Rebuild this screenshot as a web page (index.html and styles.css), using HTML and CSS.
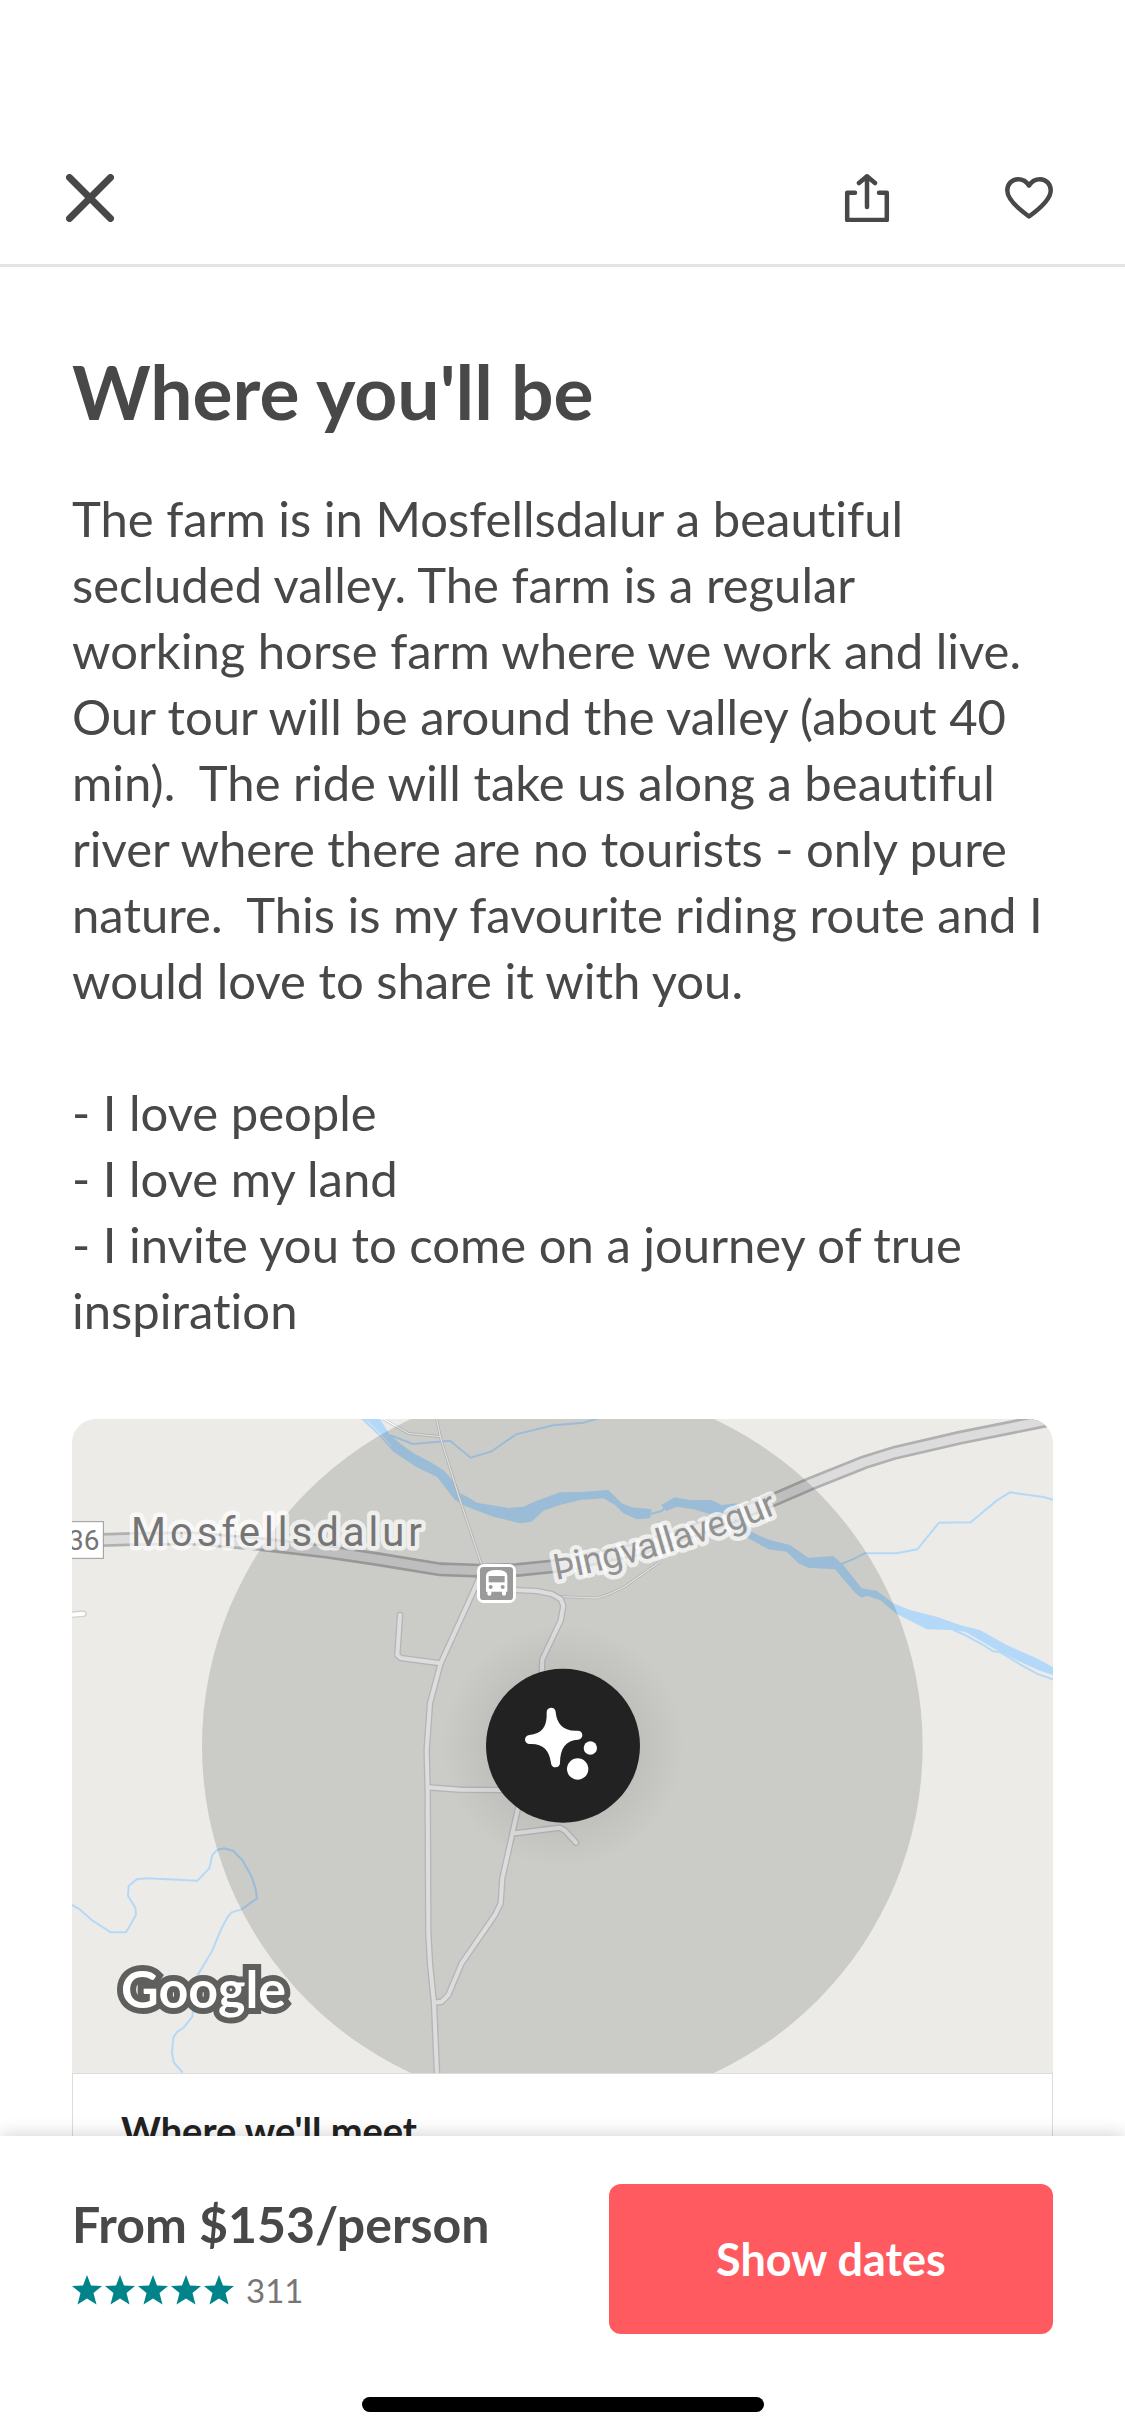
FILE: index.html
```html
<!DOCTYPE html>
<html lang="en">
<head>
<meta charset="utf-8">
<meta name="viewport" content="width=device-width, initial-scale=1">
<title>Where you'll be</title>
<link rel="stylesheet" href="styles.css">
</head>
<body>
<header class="topbar">
  <button class="icon-button" type="button" aria-label="Close">
    <svg class="icon" viewBox="0 0 48 48"><path class="line line-heavy" d="M3.500 3.500 44.500 44.500M44.500 3.500 3.500 44.500"/></svg>
  </button>
  <div class="topbar-actions">
    <button class="icon-button" type="button" aria-label="Share">
      <svg class="icon" viewBox="0 0 48 48"><path class="line" d="M12 18.700H4.200V46H43.800V18.700H36M24 33V3M16 9 24 2.300 32 9"/></svg>
    </button>
    <button class="icon-button" type="button" aria-label="Save">
      <svg class="icon" viewBox="0 0 48 48"><path class="line" d="M24 42.500C15 36 2.300 26 2.300 16.500 2.300 10 7 5.200 13 5.200 17.500 5.200 21.500 7.500 24 11.500 26.500 7.500 30.500 5.200 35 5.200 41 5.200 45.700 10 45.700 16.500 45.700 26 33 36 24 42.500Z"/></svg>
    </button>
  </div>
</header>

<main class="content">
  <h1 class="title">Where you'll be</h1>
  <p class="description">The farm is in Mosfellsdalur a beautiful
secluded valley. The farm is a regular
working horse farm where we work and live.
Our tour will be around the valley (about 40
min).&nbsp; The ride will take us along a beautiful
river where there are no tourists - only pure
nature.&nbsp; This is my favourite riding route and I
would love to share it with you.

- I love people
- I love my land
- I invite you to come on a journey of true
inspiration</p>

  <section class="place-card">
    <svg class="map" viewBox="0 0 981 654" role="img" aria-label="Map of Mosfellsdalur">
      <svg viewBox="0 0 2943 1962" width="981" height="654">
        <rect class="land" width="2943" height="1962"/>
        <g class="water">
          <path d="M867 0 924 0 954 48 984 73 1024 103 1074 128 1114 153 1154 198 1164 223 1189 235 1214 251 1309 267 1354 263 1394 245 1464 220 1524 219 1609 213 1649 253 1679 265 1739 271 1734 298 1694 301 1654 283 1629 258 1594 238 1524 243 1464 258 1414 275 1379 308 1344 313 1264 293 1179 261 1149 243 1114 198 1094 173 1034 145 964 98 924 53Z"/>
          <path d="M1767 258 1809 235 1854 243 1919 243 1949 258 1994 253 2020 290 2034 335 2064 351 2094 363 2154 378 2209 416 2284 411 2314 438 2369 508 2414 515 2464 553 2514 573 2594 593 2664 618 2724 633 2804 678 2894 718 2943 745 2943 768 2904 755 2844 728 2764 688 2679 638 2634 633 2564 631 2474 585 2424 543 2384 530 2369 536 2349 521 2289 451 2209 446 2179 433 2144 398 2089 391 2024 355 1994 323 1954 291 1914 285 1864 271 1814 263 1782 276Z"/>
        </g>
        <g class="stream">
          <path d="M1736 285 1769 276 1779 265"/>
          <path d="M2644 633 2679 648 2734 678 2764 697 2784 699 2844 736 2899 766 2943 781"/>
          <path d="M2304 436 2334 425 2379 403 2474 403 2536 391 2601 311 2696 310 2774 245 2814 220 2914 234 2943 242"/>
          <path d="M954 48 1022 75 1134 65 1196 116 1259 97 1332 46 1444 19 1534 11 1579 -2"/>
          <path d="M0 1458 22 1470 59 1503 116 1540 162 1540 192 1488 190 1466 168 1430 170 1401 194 1381 224 1378 376 1385 412 1348 421 1308 436 1292 456 1288 484 1296 512 1325 539 1373 551 1410 555 1438 509 1471 479 1480 466 1495 444 1538 421 1595 374 1673 361 1793 334 1827 316 1838 304 1855 300 1903 306 1931 332 1961"/>
        </g>
        <path class="shoal" d="M885 5 920 40 958 82"/>
        <g class="track-edge">
          <path id="tracks" d="M934 0 1009 43 1104 53M1094 0 1106 58 1164 243 1229 438M1464 533 1574 537 1609 526 1659 503 1764 428"/>
        </g>
        <use class="track" href="#tracks"/>
        <g class="street-edge">
          <path id="streets" d="M1224 473 1179 573 1106 733 1074 853 1064 993 1067 1113 1069 1543 1074 1633 1086 1753 1095 1963M984 588 976 708 986 717 1106 733M-10 588 34 584M1274 513 1329 513 1394 516 1439 525 1466 540 1474 560 1466 605 1411 721 1409 765M1067 1105 1164 1112 1294 1113M1339 1163 1319 1253 1291 1378 1286 1453 1269 1488 1169 1633 1129 1728 1109 1748 1086 1751M1329 1243 1464 1226 1479 1235 1512 1271"/>
        </g>
        <use class="street" href="#streets"/>
        <g class="highway-edge">
          <path id="highway" d="M60 364 186 360 364 358 564 375 764 398 914 420 1104 451 1224 455 1334 453 1464 440 1700 390 1944 308 2099 245 2214 195 2374 131 2469 101 2664 56 2894 10 2964 -5"/>
        </g>
        <use class="highway" href="#highway"/>
        <circle class="area" cx="1471" cy="981" r="1081"/>
        <rect class="shield" x="-40" y="308" width="134" height="110"/>
        <rect class="stop-edge" x="1215" y="435" width="117" height="117" rx="20"/>
        <rect class="stop" x="1224" y="444" width="99" height="99" rx="10"/>
        <path class="bus" d="M1242 470Q1242 453 1274 453T1306 470V518H1302V525Q1302 530 1296 530T1290 525V518H1258V525Q1258 530 1252 530T1246 525V518H1242Z"/>
        <path class="stop" d="M1250 471H1298V490H1250Z"/>
        <circle class="stop" cx="1256" cy="504" r="6"/>
        <circle class="stop" cx="1292" cy="504" r="6"/>
      </svg>
      <defs>
        <path id="road-label" d="M484 161Q600 139 712 92"/>
        <radialGradient id="glow">
          <stop offset="0.600" stop-color="#000" stop-opacity="0.060"/>
          <stop offset="1" stop-color="#000" stop-opacity="0"/>
        </radialGradient>
      </defs>
      <text class="label label-shield" x="-4" y="131">36</text>
      <text class="label label-town" x="59" y="127">Mosfellsdalur</text>
      <text class="label label-road"><textPath href="#road-label">Þingvallavegur</textPath></text>
      <text class="label label-brand" x="49" y="589">Google</text>
      <circle cx="491" cy="327" r="122" fill="url(#glow)"/>
      <svg viewBox="0 0 2943 1962" width="981" height="654">
        <circle class="pin" cx="1473" cy="980" r="231"/>
        <g class="spark" transform="translate(1164 663)">
          <path d="M260 217a13 13 0 0 1 27-1C290 250 310 275 353 272a13 13 0 0 1 1 27C318 300 300 325 300 368a13 13 0 0 1-27 1C268 330 248 310 209 312a13 13 0 0 1-1-27C245 282 262 262 260 217Z"/>
          <circle cx="391" cy="324" r="20"/>
          <circle cx="353" cy="387" r="32"/>
        </g>
      </svg>
    </svg>
    <div class="place-details">
      <h2 class="place-heading">Where we'll meet</h2>
    </div>
  </section>
</main>

<footer class="booking">
  <div class="booking-row">
    <div class="summary">
      <p class="price">From $153/person</p>
      <div class="rating">
        <svg class="stars" viewBox="0 0 162 30" role="img" aria-label="5 out of 5 stars">
          <defs><path id="star" d="M15 0 19 10.500 30 11 21.500 18 24.500 29.500 15 23.500 5.500 29.500 8.500 18 0 11 11 10.500Z"/></defs>
          <use href="#star"/><use href="#star" x="33"/><use href="#star" x="66"/><use href="#star" x="99"/><use href="#star" x="132"/>
        </svg>
        <span class="reviews">311</span>
      </div>
    </div>
    <button class="cta" type="button">Show dates</button>
  </div>
  <div class="home-indicator"></div>
</footer>
</body>
</html>
```
FILE: styles.css
```css
* {
  box-sizing: border-box;
}

body {
  display: flex;
  flex-direction: column;
  height: 100vh;
  margin: 0;
  background: #fff;
  color: #484848;
  font-family: Lato, "Open Sans", sans-serif;
  font-variant-ligatures: none;
}

h1,
h2,
p {
  margin: 0;
}

button {
  padding: 0;
  border: 0;
  background: none;
  font-family: inherit;
}

.topbar {
  display: flex;
  justify-content: space-between;
  padding: 174px 72px 42px 66px;
  border-bottom: 3px solid #e4e4e4;
}

.topbar-actions {
  display: flex;
  gap: 114px;
}

.icon-button {
  display: block;
}

.icon {
  display: block;
  width: 48px;
  height: 48px;
}

.line {
  fill: none;
  stroke: #484848;
  stroke-width: 4.500px;
  stroke-linecap: round;
  stroke-linejoin: round;
}

.line-heavy {
  stroke-width: 7px;
}

.content {
  flex: 1;
  min-height: 0;
  overflow: hidden;
  padding: 82px 72px 0;
}

.title {
  font-size: 75px;
  line-height: 84px;
}

.description {
  margin-top: 52px;
  font-size: 49px;
  line-height: 66px;
  white-space: pre-line;
}

.place-card {
  margin-top: 76px;
}

.map {
  display: block;
  width: 100%;
  border-radius: 24px 24px 0 0;
}

.place-details {
  padding: 32px 48px 48px;
  border: 1px solid #dcdcdc;
}

.place-heading {
  color: #222;
  font-size: 38px;
  line-height: 48px;
}

.land { fill: #ecebe7; }
.water { fill: #b4d9f8; }
.stream { fill: none; stroke: #b4d9f8; stroke-width: 6px; }
.shoal { fill: none; stroke: #ecebe7; stroke-width: 3px; }
.track-edge { fill: none; stroke: #c8c8cc; stroke-width: 8px; }
.track { fill: none; stroke: #fff; stroke-width: 4px; }
.street-edge { fill: none; stroke: #d2d1d6; stroke-width: 20px; stroke-linecap: round; stroke-linejoin: round; }
.street { stroke: #fff; stroke-width: 12px; stroke-linecap: round; stroke-linejoin: round; }
.highway-edge { fill: none; stroke: #b0b0b0; stroke-width: 42px; }
.highway { stroke: #dcdcdc; stroke-width: 26px; }
.track,
.street,
.highway { fill: none; }

.area { fill: #000a00; fill-opacity: 0.137; }
.shield { fill: #fff; stroke: #999; stroke-width: 3px; }
.stop-edge,
.bus,
.spark { fill: #fff; }
.stop { fill: #9a9a9a; }
.pin { fill: #222; }

.label {
  fill: #757575;
  font-family: Roboto, sans-serif;
  stroke: rgba(255, 255, 255, 0.700);
  stroke-linejoin: round;
  paint-order: stroke;
}

.label-shield {
  font-size: 28px;
  stroke: none;
}

.label-town {
  font-size: 40px;
  letter-spacing: 4px;
  stroke-width: 9px;
}

.label-road {
  fill: #929292;
  font-size: 36px;
  stroke-width: 9px;
}

.label-brand {
  fill: #fff;
  font-family: Lato, sans-serif;
  font-size: 52px;
  font-weight: 700;
  stroke: #5f5f5d;
  stroke-width: 12px;
  stroke-linejoin: miter;
}

.booking {
  position: relative;
  padding: 48px 72px 24px;
  background: #fff;
  box-shadow: 0 0 18px rgba(0, 0, 0, 0.200);
}

.booking-row {
  display: flex;
  justify-content: space-between;
}

.summary {
  padding-top: 10px;
}

.price {
  font-size: 50px;
  font-weight: 700;
  line-height: 60px;
}

.rating {
  display: flex;
  align-items: center;
  gap: 12px;
  margin-top: 18px;
}

.stars {
  display: block;
  width: 162px;
  height: 30px;
  fill: #008489;
}

.reviews {
  color: #767676;
  font-size: 33px;
  line-height: 36px;
}

.cta {
  width: 444px;
  height: 150px;
  border-radius: 12px;
  background: #ff5a5f;
  color: #fff;
  font-size: 45px;
  font-weight: 700;
}

.home-indicator {
  width: 402px;
  height: 15px;
  margin: 63px auto 0;
  border-radius: 8px;
  background: #000;
}
```
